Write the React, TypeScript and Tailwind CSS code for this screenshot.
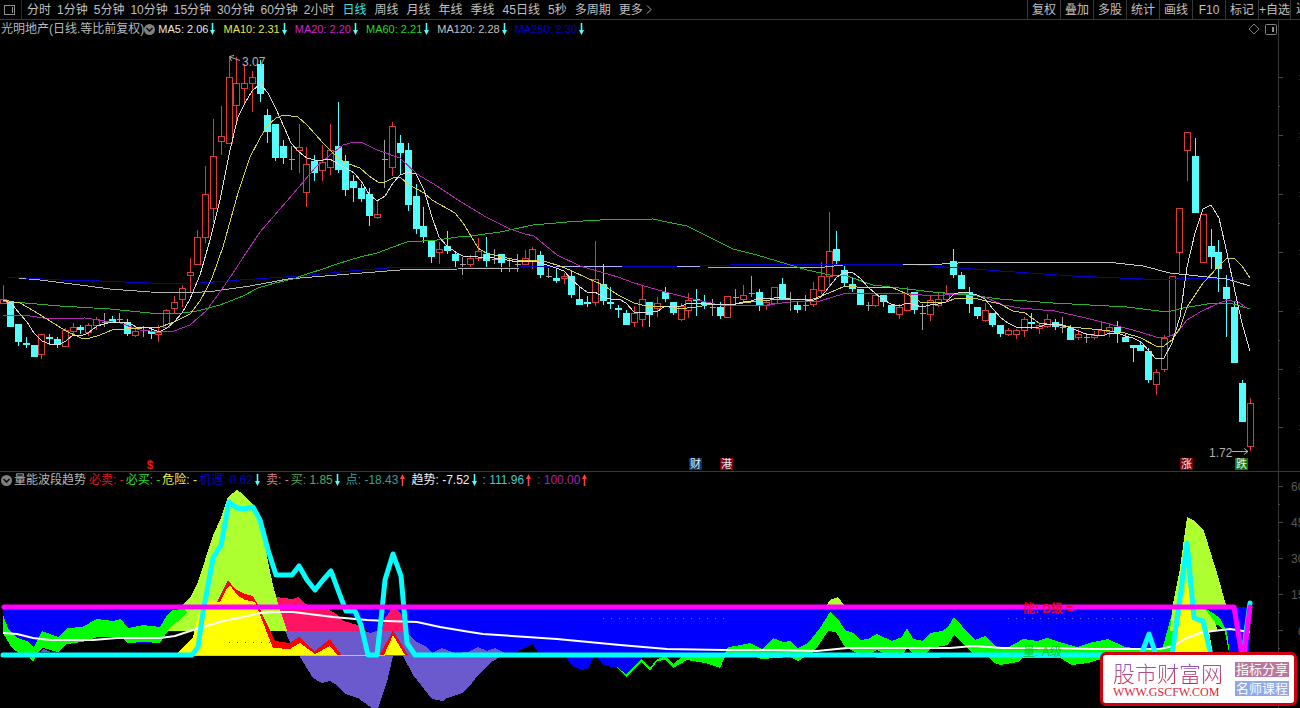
import { useState } from "react";
import clsx from "clsx";

type Candle = [kind: "r" | "c" | "w", top: number, bottom: number, high: number, low: number];

// kind, body top, body bottom, wick high, wick low
const CANDLES: Candle[] = [
  ["r", 299, 303, 285, 304], ["c", 301, 327, 301, 327], ["c", 324, 342, 324, 346], ["c", 343, 345, 337, 348],
  ["c", 345, 357, 345, 357], ["r", 334, 354, 334, 359], ["c", 337, 339, 334, 345], ["c", 339, 345, 337, 348],
  ["r", 330, 346, 328, 346], ["r", 327, 331, 323, 335], ["c", 327, 330, 325, 334], ["r", 325, 332, 323, 336],
  ["r", 319, 325, 317, 330], ["w", 322, 322, 313, 327], ["c", 319, 322, 316, 323], ["w", 319, 319, 313, 323],
  ["c", 322, 334, 319, 336], ["r", 331, 335, 327, 337], ["w", 330, 330, 326, 337], ["c", 331, 334, 327, 339],
  ["r", 332, 334, 325, 342], ["r", 310, 327, 309, 328], ["r", 302, 308, 296, 313], ["r", 288, 299, 285, 307],
  ["r", 272, 275, 258, 292], ["r", 237, 264, 230, 264], ["r", 194, 237, 166, 243], ["r", 156, 208, 119, 223],
  ["r", 136, 141, 106, 155], ["r", 77, 143, 57, 144], ["r", 83, 105, 57, 121], ["r", 83, 88, 64, 105],
  ["r", 77, 83, 71, 112], ["c", 64, 94, 60, 102], ["c", 115, 132, 109, 143], ["c", 124, 158, 124, 161],
  ["c", 146, 158, 140, 164], ["w", 159, 159, 146, 170], ["r", 147, 150, 124, 173], ["r", 164, 192, 147, 207],
  ["c", 161, 173, 155, 181], ["r", 162, 170, 145, 181], ["r", 150, 167, 124, 175], ["c", 146, 170, 102, 173],
  ["c", 161, 190, 155, 196], ["c", 181, 188, 175, 202], ["c", 188, 199, 184, 202], ["c", 194, 216, 188, 226],
  ["r", 214, 217, 201, 219], ["w", 159, 159, 140, 188], ["r", 126, 167, 122, 176], ["c", 143, 153, 135, 174],
  ["c", 150, 205, 143, 211], ["c", 196, 229, 184, 234], ["c", 226, 237, 207, 243], ["c", 241, 257, 241, 263],
  ["r", 249, 252, 242, 264], ["c", 246, 251, 231, 254], ["c", 254, 261, 251, 268], ["w", 264, 264, 257, 275],
  ["r", 258, 264, 255, 269], ["r", 251, 258, 238, 261], ["c", 254, 261, 237, 269], ["w", 259, 259, 249, 264],
  ["c", 254, 263, 254, 272], ["w", 260, 260, 259, 272], ["w", 264, 264, 254, 272], ["r", 258, 264, 250, 265],
  ["r", 249, 261, 247, 269], ["c", 255, 275, 251, 278], ["w", 276, 276, 268, 278], ["c", 278, 281, 269, 283],
  ["r", 276, 278, 273, 284], ["c", 276, 295, 270, 298], ["c", 299, 305, 287, 305], ["c", 302, 304, 296, 307],
  ["r", 279, 302, 241, 306], ["c", 284, 301, 264, 305], ["c", 302, 304, 287, 309], ["c", 308, 310, 305, 318],
  ["c", 313, 325, 310, 325], ["r", 313, 322, 306, 327], ["r", 299, 319, 285, 327], ["c", 302, 315, 302, 327],
  ["r", 303, 308, 297, 317], ["c", 292, 299, 287, 302], ["c", 302, 313, 302, 315], ["r", 306, 319, 303, 321],
  ["r", 300, 310, 293, 318], ["c", 299, 301, 289, 316], ["c", 302, 305, 295, 309], ["w", 307, 307, 299, 316],
  ["c", 307, 316, 302, 319], ["r", 296, 317, 296, 318], ["w", 297, 297, 289, 304], ["r", 295, 299, 285, 301],
  ["w", 293, 293, 276, 297], ["c", 292, 305, 289, 311], ["r", 302, 305, 300, 310], ["r", 287, 303, 287, 303],
  ["c", 284, 300, 278, 300], ["w", 299, 299, 292, 311], ["c", 305, 310, 302, 313], ["w", 305, 305, 295, 311],
  ["r", 289, 304, 282, 307], ["r", 276, 290, 262, 294], ["r", 251, 276, 212, 286], ["c", 249, 261, 231, 264],
  ["c", 270, 283, 266, 287], ["c", 284, 289, 278, 292], ["c", 289, 305, 289, 305], ["w", 305, 305, 302, 311],
  ["r", 295, 305, 293, 307], ["c", 295, 302, 295, 307], ["c", 305, 313, 305, 313], ["r", 307, 314, 304, 319],
  ["r", 293, 310, 287, 310], ["c", 292, 310, 292, 314], ["w", 313, 313, 304, 330], ["r", 300, 314, 296, 321],
  ["r", 299, 305, 293, 307], ["r", 293, 299, 285, 302], ["c", 261, 275, 249, 278], ["c", 275, 289, 272, 289],
  ["c", 292, 304, 287, 313], ["c", 307, 316, 307, 319], ["r", 310, 320, 303, 322], ["c", 313, 325, 313, 327],
  ["c", 325, 334, 325, 337], ["r", 330, 334, 328, 336], ["r", 330, 334, 329, 339], ["r", 319, 330, 317, 337],
  ["c", 322, 324, 313, 329], ["r", 325, 328, 323, 334], ["r", 319, 326, 314, 328], ["c", 322, 327, 319, 330],
  ["w", 327, 327, 317, 333], ["c", 328, 340, 325, 340], ["r", 334, 337, 329, 340], ["w", 337, 337, 333, 343],
  ["r", 335, 337, 331, 340], ["r", 330, 335, 322, 336], ["r", 327, 331, 323, 337], ["c", 327, 333, 321, 343],
  ["c", 337, 342, 333, 342], ["c", 345, 348, 345, 362], ["c", 345, 351, 341, 351], ["c", 351, 380, 348, 383],
  ["r", 372, 384, 369, 395], ["r", 338, 369, 335, 372], ["r", 276, 335, 276, 335], ["r", 208, 252, 208, 273],
  ["r", 132, 150, 132, 181], ["c", 156, 213, 138, 213], ["r", 214, 262, 214, 262], ["c", 246, 257, 229, 269],
  ["c", 252, 269, 240, 292], ["c", 287, 299, 275, 337], ["c", 307, 363, 302, 363], ["c", 383, 422, 380, 422],
  ["r", 403, 446, 398, 451],
];

const MA_LINES = [
  {
    color: "#b4b4b4",
    points: "8,277 40,280 80,285 110,289 150,292 190,293 215,291 250,286 288,279 337,275 400,270 458,269 520,268",
  },
  {
    color: "#0000c8",
    points: "8,277 60,280 100,281 150,283 200,283 240,280 300,276 350,271 400,267 520,267 560,266 700,266 760,264 903,264 960,268 1000,271 1073,276 1143,279 1177,279 1213,278 1250,280",
  },
  { color: "#b4b4ff", points: "556,266 622,266" },
  { color: "#b4b4ff", points: "677,266 700,266" },
  { color: "#b4b4b4", points: "708,267 825,267 843,265" },
  {
    color: "#c8c8c8",
    points: "903,264 927,265 973,262 1107,262 1143,266 1170,273 1207,277 1227,279 1250,286",
  },
  {
    color: "#28b428",
    points: "3,301 25,303 60,306 110,309 150,313 175,314 197,311 220,305 243,296 258,288 275,283 293,279 307,274 323,269 337,264 360,257 377,253 393,247 407,242 437,240 458,237 471,236 500,232 533,225 567,222 600,220 653,219 667,222 687,226 713,239 733,249 757,255 787,264 807,270 830,275 847,276 873,285 907,289 933,292 969,295 1000,299 1053,303 1127,307 1167,312 1183,308 1207,304 1230,303 1250,309",
  },
  {
    color: "#b428b4",
    points: "3,315 30,316 50,319 85,318 105,321 120,323 140,330 160,332 174,331 190,325 206,311 220,292 233,273 246,253 260,232 293,194 315,168 330,155 343,145 354,142 363,143 377,150 400,158 417,174 437,186 458,200 486,217 510,229 525,234 534,236 557,255 580,266 618,277 634,283 665,292 697,300 720,305 767,305 790,302 820,301 843,294 867,293 900,293 933,296 969,293 987,298 1003,305 1020,308 1055,311 1086,318 1133,330 1156,337 1167,337 1177,333 1187,320 1200,312 1219,303 1228,300 1240,303 1245,307",
  },
  {
    color: "#d2d250",
    points: "3,300 20,303 34,311 50,321 66,331 81,338 90,338 100,335 112,330 125,329 160,327 174,322 190,314 200,301 206,290 212,278 223,247 238,193 250,157 260,138 268,125 276,118 284,115 298,117 307,125 323,143 338,158 346,163 360,168 369,176 378,182 385,182 393,178 400,177 408,184 424,193 432,200 455,213 463,223 471,236 478,248 486,253 502,257 517,260 533,260 547,262 560,266 572,271 587,278 603,285 618,295 634,303 650,307 665,306 677,309 697,307 712,304 728,305 743,303 759,301 782,299 813,299 829,293 845,286 868,288 891,287 907,294 922,303 946,302 957,298 973,298 987,301 1000,304 1013,311 1025,313 1039,323 1055,325 1071,327 1102,330 1125,333 1141,338 1156,346 1164,346 1172,340 1180,328 1187,307 1203,283 1219,266 1227,258 1234,258 1242,266 1250,278",
  },
  {
    color: "#dcdcdc",
    points: "3,300 11,303 20,314 27,322 34,333 42,341 50,344 60,344 66,341 73,335 81,336 88,333 97,326 104,324 112,322 128,322 136,327 147,327 159,332 167,328 174,322 182,313 190,299 200,275 210,240 220,200 230,150 238,117 245,103 252,91 260,84 268,93 276,109 284,127 291,143 299,152 307,158 315,160 323,160 330,159 338,164 346,168 354,173 361,181 369,194 377,201 385,196 393,183 400,175 408,172 416,174 424,190 432,217 439,237 447,246 457,253 463,256 478,257 494,258 502,259 517,262 533,261 541,263 556,268 564,271 572,280 580,287 587,292 595,292 603,297 611,299 619,299 626,303 634,312 650,312 658,311 665,306 681,306 689,303 704,303 712,304 728,305 736,304 743,302 751,301 759,298 774,298 782,297 790,299 806,300 814,300 821,297 829,287 837,277 845,272 852,272 860,278 868,287 876,294 884,300 891,304 899,306 907,303 915,305 922,307 930,305 938,304 946,302 954,294 962,292 969,293 977,295 985,299 993,309 1001,318 1008,323 1016,327 1032,328 1039,327 1047,324 1063,325 1071,328 1078,331 1086,334 1102,336 1110,333 1118,333 1125,336 1133,338 1141,342 1149,351 1156,359 1164,358 1172,343 1180,317 1187,267 1195,233 1203,209 1211,205 1219,218 1227,253 1234,287 1242,323 1250,351",
  },
];

// painted bottom to top
const AREAS = [
  { fill: "#0000ff", points: "3,607 1250,607 1250,656 3,656" },
  { fill: "#0000ff", points: "565,655 572,666 582,670 588,668 594,656" },
  { fill: "#0000ff", points: "596,655 603,665 617,668 626,676 643,657" },
  { fill: "#000000", points: "515,653 524,648 533,644 538,653" },
  // left green band and the gap under it
  {
    fill: "#000000",
    points: "3,633 12,648 20,654 43,648 58,652 67,644 82,642 97,637 121,637 128,643 160,643 167,632 290,631 300,653 3,655",
  },
  { fill: "#6a5acd", points: "40,652 44,649 51,652" },
  {
    fill: "#00ff00",
    points: "3,615 8,628 17,638 27,641 34,647 42,631 58,637 67,628 82,627 97,619 113,621 121,619 128,628 143,625 160,627 167,615 172,610 183,609 190,607 200,607 187,613 177,622 167,632 160,643 143,642 128,643 121,637 97,637 82,642 67,644 58,652 43,648 38,652 33,662 28,655 20,654 12,648 3,633",
  },
  { fill: "#000000", points: "276,607 345,607 347,612 354,617 368,632 290,631" },
  {
    fill: "#ff1464",
    points: "276,597 292,599 299,597 305,604 318,607 328,609 336,614 343,621 358,625 364,631 285,631",
  },
  {
    fill: "#adff2f",
    points: "166,631 177,622 187,613 183,604 190,598 198,582 205,560 213,535 221,518 228,497 237,490 243,494 253,505 262,525 268,562 273,585 277,600 287,631",
  },
  {
    fill: "#6a5acd",
    points: "285,631 364,631 370,633 380,630 405,631 417,642 425,646 432,653 442,648 455,653 468,652 478,647 487,651 495,648 505,653 498,658 490,663 478,675 472,683 463,693 447,698 443,701 432,699 413,675 403,656 393,656 387,682 378,708 372,708 358,698 345,694 338,686 330,681 322,683 313,678 300,657 290,642",
  },
  { fill: "#ff1464", points: "382,631 385,618 393,607 401,613 405,631" },
  {
    fill: "#ff0000",
    points: "217,602 228,580 235,589 245,594 253,596 258,605 275,641 290,643 299,637 307,645 315,651 330,639 342,656 217,656",
  },
  { fill: "#ff0000", points: "380,655 393,630 408,655" },
  {
    fill: "#ffff00",
    points: "176,655 187,643 193,637 200,608 210,601 220,602 227,588 230,585 237,595 245,600 255,602 258,610 273,648 290,649 300,643 315,654 330,646 338,656",
  },
  { fill: "#ffff00", points: "384,655 393,635 405,655" },
  // right part of the green band
  {
    fill: "#00ff00",
    points: "617,667 626,674 642,659 650,668 657,659 666,656 673,664 683,656 724,655 728,647 735,646 750,643 762,649 773,638 783,642 790,641 798,648 808,643 820,628 830,612 838,619 845,630 853,633 860,640 868,639 877,634 892,641 902,637 907,628 913,639 923,641 930,633 942,631 948,627 954,617 962,626 975,640 985,636 997,647 1007,648 1023,639 1037,641 1047,638 1063,643 1077,647 1093,642 1108,639 1125,647 1143,649 1162,650 1172,613 1176,607 1203,607 1213,613 1220,618 1227,632 1230,656 1170,662 1098,660 1088,663 1072,665 1060,658 1023,658 1018,662 1000,665 995,663 988,657 891,658 860,657 807,656 798,661 790,657 762,659 755,657 725,657 720,668 705,663 687,660 673,668 665,660 657,661 650,671 642,662 626,677",
  },
  { fill: "#000000", points: "813,653 820,643 828,631 836,632 845,647 857,653" },
  { fill: "#000000", points: "872,653 877,650 883,653" },
  { fill: "#000000", points: "904,653 907,647 912,653" },
  { fill: "#000000", points: "927,653 931,648 948,645 954,635 972,653" },
  { fill: "#000000", points: "1195,631 1218,625 1225,632 1229,653 1205,656" },
  { fill: "#adff2f", points: "827,605 830,600 838,597 844,605" },
  {
    fill: "#adff2f",
    points: "1170,631 1173,604 1180,568 1187,517 1193,520 1204,531 1217,573 1226,605 1226,608 1204,608 1215,622 1218,631",
  },
  { fill: "#ffff00", points: "1173,655 1187,580 1195,622 1208,625 1213,655" },
];

const CYAN_PATH =
  "3,655 192,655 198,647 203,612 213,558 221,545 229,502 237,508 243,509 253,507 260,520 268,550 276,575 292,575 299,566 307,580 315,590 323,580 331,571 338,590 346,611 355,611 361,625 368,655 377,655 382,610 385,580 393,554 401,576 407,643 415,655 1141,655 1149,634 1156,655 1172,655 1180,598 1187,543 1194,618 1203,621 1211,655 1243,655 1250,603";
const WHITE_PATH =
  "3,633 17,634 33,638 50,640 93,640 117,638 160,638 175,636 193,630 223,621 243,617 260,613 273,612 293,612 333,617 367,620 387,621 417,622 440,627 470,632 483,634 557,639 620,645 667,649 723,650 773,650 817,651 847,648 950,648 973,646 1003,648 1047,648 1093,649 1160,649 1173,646 1187,638 1200,633 1213,631 1230,629 1250,632";

const MINUTE_PERIODS = ["分时", "1分钟", "5分钟", "10分钟", "15分钟", "30分钟", "60分钟", "2小时"];
const DAY_PERIODS = ["日线", "周线", "月线", "年线", "季线", "45日线", "5秒", "多周期"];
const TOOLS = ["复权", "叠加", "多股", "统计", "画线", "F10", "标记", "+自选"];

const AVERAGES = [
  { text: "MA5: 2.06", color: "text-[#e6e6e6]" },
  { text: "MA10: 2.31", color: "text-[#e6e640]" },
  { text: "MA20: 2.20", color: "text-[#d020d0]" },
  { text: "MA60: 2.21", color: "text-[#20dc20]" },
  { text: "MA120: 2.28", color: "text-[#c0c0c0]" },
  { text: "MA250: 2.30", color: "text-[#0000c8]" },
];

const SIGNALS = [
  { text: "必卖: -", color: "text-[#e01818]" },
  { text: "必买: -", color: "text-[#20e020]" },
  { text: "危险: -", color: "text-[#f0f040]" },
  { text: "机遇: 0.62", color: "text-[#0000c8]", dir: "down" },
  { text: "卖: -", color: "text-[#d88080]" },
  { text: "买: 1.85", color: "text-[#58a858]", dir: "down" },
  { text: "点: -18.43", color: "text-[#30a0a0]", dir: "up" },
  { text: "趋势: -7.52", color: "text-[#f0f0f0]", dir: "down" },
  { text: ": 111.96", color: "text-[#40c8c8]", dir: "up" },
  { text: ": 100.00", color: "text-[#b020b0]", dir: "up" },
];

const SCALE = [
  { label: "60", y: 486 },
  { label: "45", y: 522 },
  { label: "30", y: 558 },
  { label: "15", y: 594 },
];

function Arrow({ dir }: { dir: string }) {
  return dir === "up" ? (
    <svg width="5" height="12" viewBox="0 0 5 12" className="shrink-0" aria-hidden="true">
      <path d="M1.700 12V3h1.600v9zM0 5l2.500-5L5 5z" fill="#ff4040" />
    </svg>
  ) : (
    <svg width="5" height="12" viewBox="0 0 5 12" className="shrink-0" aria-hidden="true">
      <path d="M1.700 0v9h1.600V0zM0 7l2.500 5L5 7z" fill="#54fcfc" />
    </svg>
  );
}

function Collapse({ label }: { label: string }) {
  return (
    <button type="button" aria-label={label} className="shrink-0">
      <svg width="11" height="11" viewBox="0 0 11 11" className="block">
        <circle cx="5.5" cy="5.5" r="5.5" fill="#808080" />
        <path d="M2.5 4l3 3 3-3" fill="none" stroke="#101010" strokeWidth="1.6" />
      </svg>
    </button>
  );
}

function Toolbar() {
  const [period, setPeriod] = useState("日线");

  const renderPeriod = (name: string) => (
    <button
      key={name}
      type="button"
      onClick={() => setPeriod(name)}
      className={clsx("whitespace-nowrap", period === name ? "text-[#40e0e0]" : "text-[#c0c0c0]")}
    >
      {name}
    </button>
  );

  return (
    <header className="flex h-5 items-stretch justify-between border-b border-[#383838]">
      <div className="flex min-w-0 items-center">
        <button type="button" aria-label="侧栏" className="flex w-[22px] items-center self-stretch border-r border-[#282828] pl-1">
          <svg width="11" height="10" viewBox="0 0 11 10" shapeRendering="crispEdges">
            <path d="M.5.5h10v9H.5zM8 2v6" fill="none" stroke="#909090" />
          </svg>
        </button>
        <nav className="flex items-center gap-2 pl-[5px]">
          <div className="flex gap-[6px]">{MINUTE_PERIODS.map(renderPeriod)}</div>
          {DAY_PERIODS.map(renderPeriod)}
          <button type="button" className="flex items-center gap-[3px] whitespace-nowrap text-[#c0c0c0]">
            更多
            <svg width="6" height="9" viewBox="0 0 6 9">
              <path d="M1 .5l4 4-4 4" fill="none" stroke="#b0b0b0" />
            </svg>
          </button>
        </nav>
      </div>
      <div className="flex shrink-0 text-[#c0c0c0]">
        {TOOLS.map((tool) => (
          <button key={tool} type="button" className="w-[33px] border-l border-[#383838] text-center whitespace-nowrap last-of-type:border-r">
            {tool}
          </button>
        ))}
        <span className="w-[9px] overflow-hidden pl-[5px] leading-[19px]">返</span>
      </div>
    </header>
  );
}

function CandleShape({ candle, index }: { candle: Candle; index: number }) {
  const [kind, top, bottom, high, low] = candle;
  const x = Math.floor(3 + index * 7.794);
  if (kind === "w") {
    return <path d={`M${x + 0.5} ${high}V${low}M${x - 2} ${top + 0.5}h6`} stroke="#a0a0a0" />;
  }
  if (kind === "c") {
    return (
      <g fill="#54fcfc">
        <rect x={x} y={high} width="1" height={low - high} />
        <rect x={x - 3} y={top} width="7" height={Math.max(2, bottom - top)} />
      </g>
    );
  }
  return (
    <path
      d={`M${x - 2.5} ${top + 0.5}h6v${bottom - top}h-6zM${x + 0.5} ${high}V${top}M${x + 0.5} ${bottom + 1}V${low}`}
      fill="none"
      stroke="#d83c3c"
    />
  );
}

function Badge({ x, fill, children }: { x: number; fill: string; children: string }) {
  return (
    <g>
      <rect x={x} y="458" width="13" height="12" fill={fill} />
      <text x={x + 1} y="468" fill="#f0f0f0" fontSize="11">
        {children}
      </text>
    </g>
  );
}

function PriceChart() {
  return (
    <svg viewBox="0 38 1300 433" className="block h-auto w-full" role="img" aria-label="光明地产 日线">
      <g shapeRendering="crispEdges">
        <path d="M1278.5 38V471" stroke="#383838" />
        {Array.from({ length: 13 }, (_, i) => (
          <path key={i} d={`M1278 ${Math.round(77 + i * 29.2) + 0.5}h${i % 2 ? 2 : 5}`} stroke="#484848" />
        ))}
        {Array.from({ length: 7 }, (_, i) => (
          <path key={i} d={`M1299.5 ${Math.round(75 + i * 58.4)}v6`} stroke="#303030" strokeDasharray="1 3" />
        ))}
        {CANDLES.map((candle, i) => (
          <CandleShape key={i} candle={candle} index={i} />
        ))}
        {MA_LINES.map((line, i) => (
          <polyline key={i} points={line.points} fill="none" stroke={line.color} />
        ))}
      </g>
      <path d="M240 60.500L230 57M234 55.500L229.500 56.500 231.500 61" fill="none" stroke="#b0b0b0" />
      <text x="242" y="66" fill="#b0b0b0" fontSize="12">3.07</text>
      <text x="1209" y="457" fill="#b0b0b0" fontSize="12">1.72</text>
      <path d="M1232 451.500h16M1244 448.500l4 3-4 3" fill="none" stroke="#b0b0b0" />
      <text x="147" y="469" fill="#f01818" fontSize="11" fontWeight="bold">$</text>
      <path d="M147.500 462l2.500-2.500 2.500 2.500" fill="none" stroke="#f01818" />
      <Badge x={689} fill="#063468">财</Badge>
      <Badge x={720} fill="#7c0010">港</Badge>
      <Badge x={1180} fill="#7c0010">涨</Badge>
      <Badge x={1235} fill="#087808">跌</Badge>
    </svg>
  );
}

function IndicatorChart() {
  return (
    <svg viewBox="0 488 1300 220" className="block h-auto w-full overflow-visible" role="img" aria-label="量能波段趋势">
      <g shapeRendering="crispEdges">
        <path d="M1278.5 488V708" stroke="#383838" />
        {Array.from({ length: 12 }, (_, i) => (
          <path key={i} d={`M1278 ${486.5 + i * 18}h${i % 2 ? 2 : 5}`} stroke="#484848" />
        ))}
        {AREAS.map((area, i) => (
          <polygon key={i} points={area.points} fill={area.fill} />
        ))}
        <path d="M190 655.5H385" stroke="#d8d800" />
        <path d="M229 642h42" stroke="#606000" strokeDasharray="1 7" />
        <path d="M603 618.5h127M1008 618.5h150" stroke="#5078ff" strokeDasharray="1 7" />
      </g>
      <polyline points={WHITE_PATH} fill="none" stroke="#ffffff" strokeWidth="2" />
      <polyline points={CYAN_PATH} fill="none" stroke="#00ffff" strokeWidth="5" strokeLinecap="round" strokeLinejoin="round" />
      <text x="1023" y="656" fill="#00c828" fontSize="12">量: A级</text>
      <polyline
        points="4,607 1234,607 1242,656 1244,656 1250,607"
        fill="none"
        stroke="#ff00ff"
        strokeWidth="5"
        strokeLinecap="round"
        strokeLinejoin="round"
      />
      <text x="1023" y="613" fill="#e80028" fontSize="12" fontWeight="bold">能: D级 =</text>
      <g fill="#585858" fontSize="12">
        {SCALE.map(({ label, y }) => (
          <text key={label} x="1291" y={y + 5}>
            {label}
          </text>
        ))}
        <text x="1298" y="636">0</text>
      </g>
    </svg>
  );
}

function SiteCard() {
  return (
    <a
      href="#site"
      className="absolute right-[3px] bottom-[2px] flex h-[54px] items-center gap-3 rounded-md border-[3px] border-[#d0000c] bg-white pr-[5px] pl-[10px]"
    >
      <span className="flex flex-col gap-px">
        <span className="bg-gradient-to-b from-[#7858d0] to-[#d81838] bg-clip-text font-['Noto_Sans_CJK_SC',sans-serif] text-[22px] leading-6 font-light text-transparent">
          股市财富网
        </span>
        <span className="font-['Liberation_Serif',serif] text-xs leading-[14px] text-[#d82838]">WWW.GSCFW.COM</span>
      </span>
      <span className="flex flex-col gap-1 font-['Liberation_Serif','Noto_Sans_CJK_SC',serif] text-[13px] leading-[15px] text-white">
        <span className="bg-[#b8789c] px-px">指标分享</span>
        <span className="bg-[#90a8e8] px-px">名师课程</span>
      </span>
    </a>
  );
}

export default function App() {
  return (
    <main className="relative w-full overflow-hidden bg-black font-['Liberation_Sans','Noto_Sans_CJK_SC',sans-serif] text-xs">
      <Toolbar />

      <section>
        <div className="flex h-[18px] justify-between">
          <div className="flex items-center whitespace-nowrap">
            <h1 className="pl-px text-[#b8b8b8]">光明地产(日线.等比前复权)</h1>
            <Collapse label="收起主图" />
            <ul className="flex items-center gap-2 pl-[3px] text-[11px]">
              {AVERAGES.map(({ text, color }) => (
                <li key={text} className={clsx("flex items-center gap-[2px]", color)}>
                  {text}
                  <Arrow dir="down" />
                </li>
              ))}
            </ul>
          </div>
          <div className="flex items-center gap-[5px]">
            <button type="button" aria-label="标记点">
              <svg width="12" height="12" viewBox="0 0 12 12" className="block">
                <path d="M6 1l5 5-5 5-5-5z" fill="none" stroke="#808080" />
              </svg>
            </button>
            <button type="button" aria-label="右侧面板">
              <svg width="12" height="11" viewBox="0 0 12 11" className="block">
                <rect x="0.500" y="0.500" width="11" height="10" rx="1" fill="none" stroke="#808080" />
                <path d="M7 3h2v5H7z" fill="#909090" />
              </svg>
            </button>
            <span className="-ml-1 w-[22px] self-stretch border-l border-[#383838]" />
          </div>
        </div>
        <PriceChart />
      </section>

      <section className="border-t border-[#383838]">
        <div className="flex h-4 justify-between">
          <div className="flex items-center whitespace-nowrap">
            <span className="flex items-center gap-[2px] pl-px">
              <Collapse label="收起副图" />
              <h2 className="text-[#b8b8b8]">量能波段趋势</h2>
            </span>
            <ul className="flex items-center gap-[2px] pl-[3px]">
              {SIGNALS.map(({ text, color, dir }) => (
                <li key={text} className={clsx("flex items-center gap-[2px]", color, dir && "mr-1")}>
                  {text}
                  {dir && <Arrow dir={dir} />}
                </li>
              ))}
            </ul>
          </div>
          <span className="w-[22px] border-l border-[#383838]" />
        </div>
        <IndicatorChart />
      </section>

      <SiteCard />
    </main>
  );
}
